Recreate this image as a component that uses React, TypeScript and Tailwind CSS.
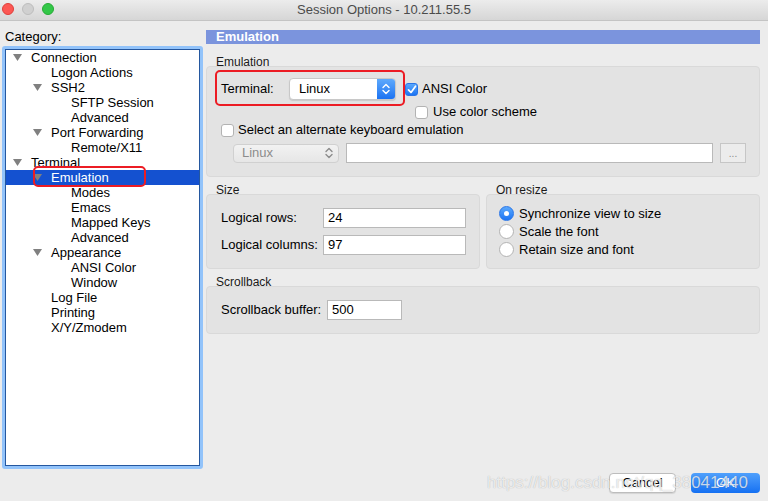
import React from "react";

type TreeNode = { level: number; label: string; open?: boolean; selected?: boolean };

const tree: TreeNode[] = [
  { level: 0, label: "Connection", open: true },
  { level: 1, label: "Logon Actions" },
  { level: 1, label: "SSH2", open: true },
  { level: 2, label: "SFTP Session" },
  { level: 2, label: "Advanced" },
  { level: 1, label: "Port Forwarding", open: true },
  { level: 2, label: "Remote/X11" },
  { level: 0, label: "Terminal", open: true },
  { level: 1, label: "Emulation", open: true, selected: true },
  { level: 2, label: "Modes" },
  { level: 2, label: "Emacs" },
  { level: 2, label: "Mapped Keys" },
  { level: 2, label: "Advanced" },
  { level: 1, label: "Appearance", open: true },
  { level: 2, label: "ANSI Color" },
  { level: 2, label: "Window" },
  { level: 1, label: "Log File" },
  { level: 1, label: "Printing" },
  { level: 1, label: "X/Y/Zmodem" },
];

const indent = ["pl-[4px]", "pl-[24px]", "pl-[44px]"];

function Disclosure() {
  return (
    <svg width="9" height="7" viewBox="0 0 9 7">
      <polygon points="0,0 9,0 4.5,7" fill="#808080" />
    </svg>
  );
}

function Chevrons({ color }: { color: string }) {
  return (
    <svg width="8" height="12" viewBox="0 0 8 12" fill="none" stroke={color} strokeWidth="1.4" strokeLinecap="round" strokeLinejoin="round">
      <polyline points="1,4.5 4,1.5 7,4.5" />
      <polyline points="1,7.5 4,10.5 7,7.5" />
    </svg>
  );
}

function Checkbox({ checked }: { checked?: boolean }) {
  if (checked) {
    return (
      <div className="w-[13px] h-[13px] rounded-[3px] bg-gradient-to-b from-[#5aa8fc] to-[#1b74f3] border border-[#2a76e8] flex items-center justify-center shrink-0">
        <svg width="10" height="9" viewBox="0 0 10 9" fill="none" stroke="white" strokeWidth="1.7" strokeLinecap="round" strokeLinejoin="round">
          <polyline points="1.5,4.8 4,7.5 8.5,1.2" />
        </svg>
      </div>
    );
  }
  return <div className="w-[13px] h-[13px] rounded-[3px] bg-white border border-[#b3b3b3] shrink-0" />;
}

function Radio({ on }: { on?: boolean }) {
  if (on) {
    return (
      <div className="w-[15px] h-[15px] rounded-full bg-gradient-to-b from-[#5aa8fc] to-[#1b74f3] border border-[#2a76e8] flex items-center justify-center shrink-0">
        <div className="w-[5px] h-[5px] rounded-full bg-white" />
      </div>
    );
  }
  return <div className="w-[15px] h-[15px] rounded-full bg-white border border-[#b3b3b3] shrink-0" />;
}

function TextField({ value, className }: { value?: string; className: string }) {
  return (
    <div className={`h-[20px] bg-white border border-[#b9b9b9] pl-[4px] text-[13px] leading-[18px] text-black ${className}`}>
      {value}
    </div>
  );
}

// group caption: the box below tucks 2px under it
function GroupLabel({ children, className = "" }: { children: React.ReactNode; className?: string }) {
  return (
    <div className={`relative z-10 h-[10px] pl-[10px] text-[12px] leading-[12px] text-[#1a1a1a] ${className}`}>
      {children}
    </div>
  );
}

export default function App() {
  return (
    <div
      className="w-[768px] h-[501px] bg-[#ececec] relative overflow-hidden text-black"
      style={{ fontFamily: '"Liberation Sans", Arial, sans-serif' }}
    >
      {/* title bar */}
      <div className="h-[21px] bg-gradient-to-b from-[#ececec] to-[#d6d6d6] border-b border-[#c4c4c4] flex items-center relative">
        <div className="flex items-center gap-[8px] pl-[2px] -mt-[2px]">
          <div className="w-[12px] h-[12px] rounded-full bg-[#fc5753] border border-[#de3f3a]" />
          <div className="w-[12px] h-[12px] rounded-full bg-[#d0d0d0] border border-[#bdbdbd]" />
          <div className="w-[12px] h-[12px] rounded-full bg-[#33c748] border border-[#27aa35]" />
        </div>
        <div className="absolute inset-0 flex items-center justify-center text-[13px] text-[#4b4b4b]">
          Session Options - 10.211.55.5
        </div>
      </div>

      <div className="flex h-[449px]">
        {/* category tree */}
        <div className="w-[206px] pl-[2px] flex flex-col">
          <div className="pl-[3px] pt-[8px] h-[25px] text-[13px] leading-[15px]">Category:</div>
          <div className="relative w-[201px] h-[423px] rounded-[3px] border-[3px] border-[#92c3fa]">
            <div className="w-full h-full border border-[#24579f] bg-white">
              {tree.map((n, i) => (
                <div
                  key={i}
                  className={`h-[15px] flex items-center ${indent[n.level]} ${n.selected ? "bg-[#1451d0] text-white" : ""}`}
                >
                  <div className="w-[21px] pl-[3px] flex items-center">{n.open && <Disclosure />}</div>
                  <span className="text-[13px] leading-[15px]">{n.label}</span>
                </div>
              ))}
            </div>
            <div className="absolute left-[28px] top-[117px] w-[113px] h-[21px] border-2 border-[#ec1c24] rounded-[5px]" />
          </div>
        </div>

        {/* options pane */}
        <div className="w-[554px] pt-[9px] flex flex-col">
          <div className="h-[14px] bg-[#7b94dd] text-white font-bold text-[13px] leading-[14px] pl-[10px]">Emulation</div>

          <GroupLabel className="mt-[12px]">Emulation</GroupLabel>
          <div className="relative h-[111px] bg-[#e3e3e3] border border-[#d9d9d9] rounded-[4px] pt-[11px] pl-[14px]">
            <div className="flex items-center h-[22px]">
              <span className="w-[68px] text-[13px]">Terminal:</span>
              <div className="w-[107px] h-[22px] bg-white border border-[#c8c8c8] rounded-[4px] shadow-[0_1px_1px_rgba(0,0,0,0.12)] flex items-center overflow-hidden">
                <span className="flex-1 pl-[9px] text-[13px]">Linux</span>
                <div className="w-[18px] h-full bg-gradient-to-b from-[#5da9fc] to-[#1a72f2] flex items-center justify-center">
                  <Chevrons color="white" />
                </div>
              </div>
              <div className="ml-[9px] flex items-center gap-[4px]">
                <Checkbox checked />
                <span className="text-[13px]">ANSI Color</span>
              </div>
            </div>
            <div className="flex items-center h-[14px] mt-[5px] pl-[194px] gap-[5px]">
              <Checkbox />
              <span className="text-[13px]">Use color scheme</span>
            </div>
            <div className="flex items-center h-[14px] mt-[4px] gap-[4px]">
              <Checkbox />
              <span className="text-[13px]">Select an alternate keyboard emulation</span>
            </div>
            <div className="flex items-center h-[20px] mt-[6px] pl-[12px]">
              <div className="w-[106px] h-[19px] bg-gradient-to-b from-[#f2f2f2] to-[#e6e6e6] border border-[#d0d0d0] rounded-[4px] flex items-center">
                <span className="flex-1 pl-[8px] text-[13px] text-[#8c8c8c]">Linux</span>
                <div className="pr-[5px] flex items-center">
                  <Chevrons color="#8c8c8c" />
                </div>
              </div>
              <TextField className="ml-[7px] w-[367px]" />
              <div className="ml-[7px] w-[26px] h-[20px] bg-[#ececec] border border-[#c6c6c6] text-[10px] text-[#8a8a8a] flex items-center justify-center">
                ...
              </div>
            </div>
            <div className="absolute left-[8px] top-[3px] w-[190px] h-[36px] border-2 border-[#ec1c24] rounded-[5px]" />
          </div>

          <div className="flex gap-[6px] mt-[7px]">
            <div className="w-[274px]">
              <GroupLabel>Size</GroupLabel>
              <div className="h-[75px] bg-[#e3e3e3] border border-[#d9d9d9] rounded-[4px] pt-[13px] pl-[14px] flex flex-col gap-[7px]">
                <div className="flex items-center h-[20px]">
                  <span className="w-[102px] text-[13px]">Logical rows:</span>
                  <TextField value="24" className="w-[143px]" />
                </div>
                <div className="flex items-center h-[20px]">
                  <span className="w-[102px] text-[13px]">Logical columns:</span>
                  <TextField value="97" className="w-[143px]" />
                </div>
              </div>
            </div>
            <div className="w-[274px]">
              <GroupLabel>On resize</GroupLabel>
              <div className="h-[75px] bg-[#e3e3e3] border border-[#d9d9d9] rounded-[4px] pt-[11px] pl-[12px] flex flex-col gap-[3px]">
                {["Synchronize view to size", "Scale the font", "Retain size and font"].map((t, i) => (
                  <div key={t} className="flex items-center h-[15px] gap-[5px]">
                    <Radio on={i === 0} />
                    <span className="text-[13px]">{t}</span>
                  </div>
                ))}
              </div>
            </div>
          </div>

          <GroupLabel className="mt-[7px]">Scrollback</GroupLabel>
          <div className="h-[48px] bg-[#e3e3e3] border border-[#d9d9d9] rounded-[4px] pt-[13px] pl-[14px]">
            <div className="flex items-center h-[20px]">
              <span className="w-[106px] text-[13px]">Scrollback buffer:</span>
              <TextField value="500" className="w-[75px]" />
            </div>
          </div>
        </div>
      </div>

      {/* dialog buttons */}
      <div className="flex justify-end items-center gap-[15px] pr-[8px] mt-[3px] h-[20px]">
        <div className="w-[67px] h-[20px] bg-white border border-[#bdbdbd] rounded-[4px] shadow-[0_1px_1px_rgba(0,0,0,0.1)] text-[13px] flex items-center justify-center">
          Cancel
        </div>
        <div className="w-[69px] h-[20px] bg-gradient-to-b from-[#4fa0fc] to-[#1470f2] rounded-[4px] text-[13px] text-white flex items-center justify-center">
          OK
        </div>
      </div>

      <div className="absolute left-[487px] top-[473px] text-[17px] leading-[20px] text-white/75 [text-shadow:0_0_1px_rgba(0,0,0,0.3)] pointer-events-none">
        https://blog.csdn.net/qq_38041440
      </div>
    </div>
  );
}
